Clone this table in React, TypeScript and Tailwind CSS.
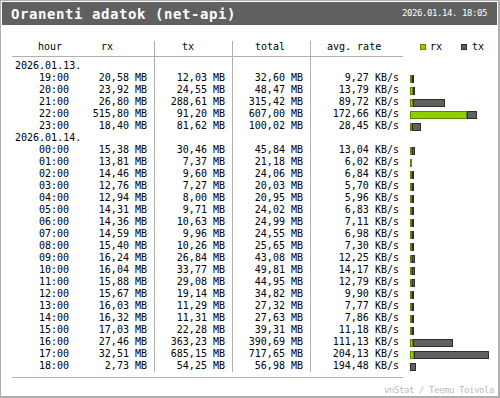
const MAX = 717.65;
const BAR = 79;

type Hour = { h: string; rx: string; tx: string; total: string; rate: string };
type Row = { date: string } | Hour;

const rows: Row[] = [
  { date: '2026.01.13.' },
  { h: '19:00', rx: '20,58', tx: '12,03', total: '32,60', rate: '9,27' },
  { h: '20:00', rx: '23,92', tx: '24,55', total: '48,47', rate: '13,79' },
  { h: '21:00', rx: '26,80', tx: '288,61', total: '315,42', rate: '89,72' },
  { h: '22:00', rx: '515,80', tx: '91,20', total: '607,00', rate: '172,66' },
  { h: '23:00', rx: '18,40', tx: '81,62', total: '100,02', rate: '28,45' },
  { date: '2026.01.14.' },
  { h: '00:00', rx: '15,38', tx: '30,46', total: '45,84', rate: '13,04' },
  { h: '01:00', rx: '13,81', tx: '7,37', total: '21,18', rate: '6,02' },
  { h: '02:00', rx: '14,46', tx: '9,60', total: '24,06', rate: '6,84' },
  { h: '03:00', rx: '12,76', tx: '7,27', total: '20,03', rate: '5,70' },
  { h: '04:00', rx: '12,94', tx: '8,00', total: '20,95', rate: '5,96' },
  { h: '05:00', rx: '14,31', tx: '9,71', total: '24,02', rate: '6,83' },
  { h: '06:00', rx: '14,36', tx: '10,63', total: '24,99', rate: '7,11' },
  { h: '07:00', rx: '14,59', tx: '9,96', total: '24,55', rate: '6,98' },
  { h: '08:00', rx: '15,40', tx: '10,26', total: '25,65', rate: '7,30' },
  { h: '09:00', rx: '16,24', tx: '26,84', total: '43,08', rate: '12,25' },
  { h: '10:00', rx: '16,04', tx: '33,77', total: '49,81', rate: '14,17' },
  { h: '11:00', rx: '15,88', tx: '29,08', total: '44,95', rate: '12,79' },
  { h: '12:00', rx: '15,67', tx: '19,14', total: '34,82', rate: '9,90' },
  { h: '13:00', rx: '16,03', tx: '11,29', total: '27,32', rate: '7,77' },
  { h: '14:00', rx: '16,32', tx: '11,31', total: '27,63', rate: '7,86' },
  { h: '15:00', rx: '17,03', tx: '22,28', total: '39,31', rate: '11,18' },
  { h: '16:00', rx: '27,46', tx: '363,23', total: '390,69', rate: '111,13' },
  { h: '17:00', rx: '32,51', tx: '685,15', total: '717,65', rate: '204,13' },
  { h: '18:00', rx: '2,73', tx: '54,25', total: '56,98', rate: '194,48' },
];

const num = (s: string) => parseFloat(s.replace(',', '.'));

const grid = 'grid grid-cols-[78px_64px_78px_78px_93px_94px]';
const vline = 'border-l border-[#b0b0b0]';

function Bar({ row }: { row: Hour }) {
  const rxw = Math.round((num(row.rx) * BAR) / MAX);
  const totw = Math.round((num(row.total) * BAR) / MAX);
  const txw = totw - rxw;
  return (
    <div className="flex pl-[7px] pt-[3px]">
      {rxw > 0 && (
        <div className="h-[8px] bg-[#92cf00] border border-[#5e8600]" style={{ width: rxw }} />
      )}
      {txw > 0 && (
        <div className="h-[8px] bg-[#606060] border border-[#2e2e2e]" style={{ width: txw }} />
      )}
    </div>
  );
}

export default function App() {
  return (
    <div className="w-[500px] h-[398px] bg-white border-l border-t border-r-2 border-b-2 border-[#aeaeae] p-px font-['DejaVu_Sans_Mono',monospace] text-black overflow-hidden">
      {/* Title bar */}
      <div className="h-[23px] bg-[#606060] flex items-center justify-between pl-[9px] pr-[10px] text-white">
        <span className="text-[14px] font-bold tracking-[0.57px] leading-none">Oranenti adatok (net-api)</span>
        <span className="text-[9px] tracking-[-0.42px] leading-none">2026.01.14. 18:05</span>
      </div>

      {/* Table */}
      <div className="ml-[10px] mt-[16px] text-[10px] leading-[12px] whitespace-pre">
        <div className={`${grid} h-[15px]`}>
          <div className="pl-[26px]">hour</div>
          <div className="pl-[11px]">rx</div>
          <div className={`${vline} pl-[27px]`}>tx</div>
          <div className={`${vline} pl-[22px]`}>total</div>
          <div className={`${vline} pl-[16px]`}>avg. rate</div>
          <div className="flex items-start pl-[17px]">
            <div className="mt-[3px] w-[6px] h-[6px] bg-[#92cf00] border border-[#5e8600]" />
            <span className="ml-[4px]">rx</span>
            <div className="ml-[19px] mt-[3px] w-[6px] h-[6px] bg-[#606060] border border-[#2e2e2e]" />
            <span className="ml-[5px]">tx</span>
          </div>
        </div>
        <div className={`${grid} h-px`}>
          <div className="bg-[#b0b0b0]" />
          <div className="bg-[#b0b0b0]" />
          <div className="bg-[#b0b0b0]" />
          <div className="bg-[#b0b0b0]" />
          <div className="bg-[#b0b0b0]" />
          <div />
        </div>
        <div className={`${grid} h-[3px]`}>
          <div />
          <div />
          <div className={vline} />
          <div className={vline} />
          <div className={vline} />
          <div />
        </div>
        {rows.map((r, i) =>
          'date' in r ? (
            <div key={i} className={`${grid} h-[12px]`}>
              <div className="col-span-2 pl-[3px]">{r.date}</div>
              <div className={vline} />
              <div className={vline} />
              <div className={vline} />
              <div />
            </div>
          ) : (
            <div key={i} className={`${grid} h-[12px]`}>
              <div className="text-right pr-[21px]">{r.h}</div>
              <div className="text-right pr-[7px]">{r.rx} MB</div>
              <div className={`${vline} text-right pr-[7px]`}>{r.tx} MB</div>
              <div className={`${vline} text-right pr-[7px]`}>{r.total} MB</div>
              <div className={`${vline} text-right pr-[4px]`}>{r.rate} KB/s</div>
              <Bar row={r} />
            </div>
          )
        )}
        <div className="mt-[5px] w-[391px] h-px bg-[#b0b0b0]" />
      </div>

      {/* Footer */}
      <div className="mt-[7px] pr-[3px] text-right text-[9px] tracking-[-0.42px] leading-[10px] text-[#bdbdbd]">
        vnStat / Teemu Toivola
      </div>
    </div>
  );
}
